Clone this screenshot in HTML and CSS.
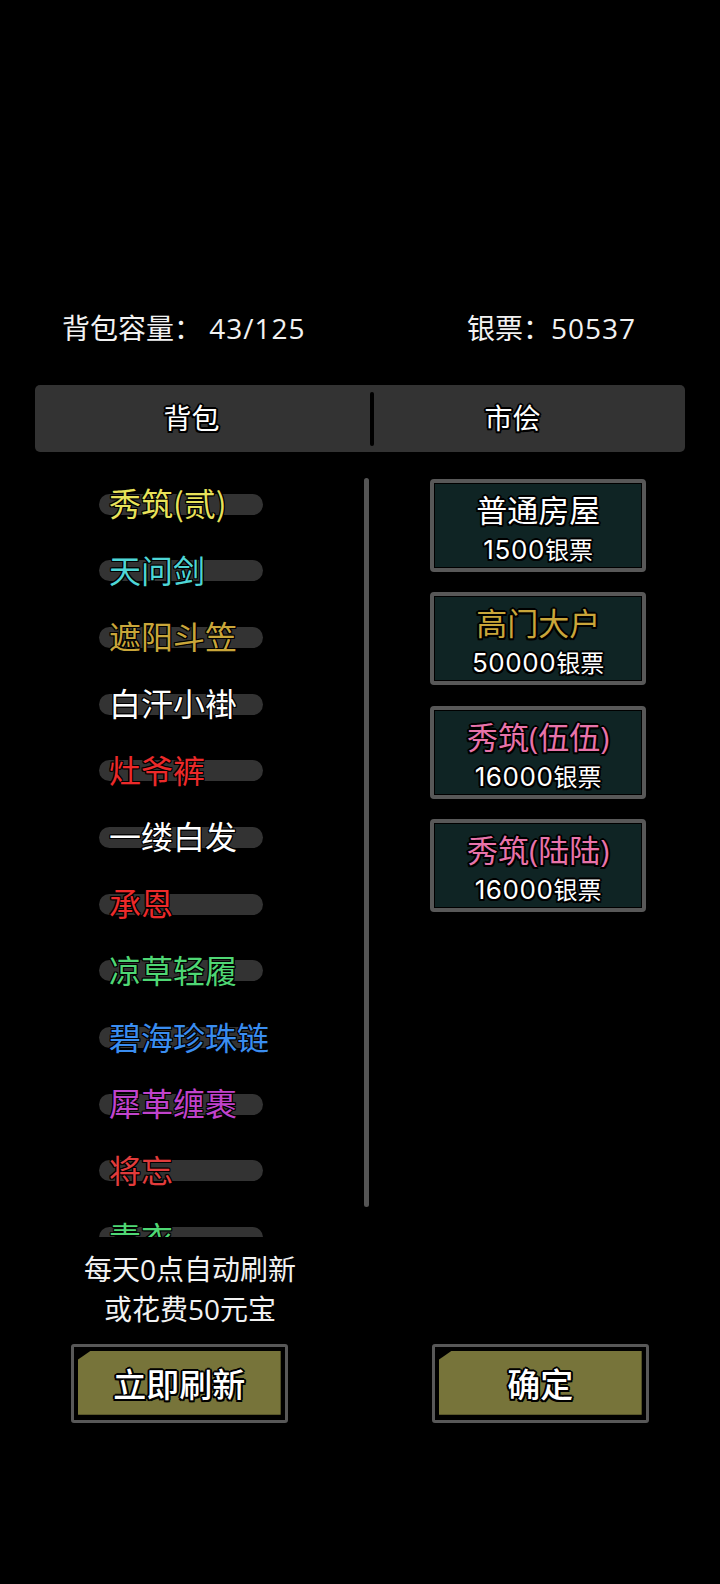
FILE: index.html
```html
<!DOCTYPE html>
<html lang="zh">
<head>
<meta charset="utf-8">
<title>市侩</title>
<link rel="stylesheet" href="styles.css">
</head>
<body>
<div class="page">
  <div class="stats">
    <div class="stat stat-bag">背包容量： <span class="num">43/125</span></div>
    <div class="stat stat-money">银票：<span class="num">50537</span></div>
  </div>

  <div class="tabs">
    <div class="tab tab-bag">背包</div>
    <div class="tab-divider"></div>
    <div class="tab tab-shop">市侩</div>
  </div>

  <div class="main">
    <div class="list">
      <div class="item"><span class="pill"></span><span class="name c-yellow">秀筑(贰)</span></div>
      <div class="item"><span class="pill"></span><span class="name c-cyan">天问剑</span></div>
      <div class="item"><span class="pill"></span><span class="name c-gold">遮阳斗笠</span></div>
      <div class="item"><span class="pill"></span><span class="name c-white">白汗小褂</span></div>
      <div class="item"><span class="pill"></span><span class="name c-red">灶爷裤</span></div>
      <div class="item"><span class="pill"></span><span class="name c-white">一缕白发</span></div>
      <div class="item"><span class="pill"></span><span class="name c-red">承恩</span></div>
      <div class="item"><span class="pill"></span><span class="name c-green">凉草轻履</span></div>
      <div class="item"><span class="pill"></span><span class="name c-blue">碧海珍珠链</span></div>
      <div class="item"><span class="pill"></span><span class="name c-purple">犀革缠裹</span></div>
      <div class="item"><span class="pill"></span><span class="name c-red2">将忘</span></div>
      <div class="item"><span class="pill"></span><span class="name c-green">青衣</span></div>
    </div>
    <div class="scrollbar"></div>
    <div class="shop">
      <div class="card">
        <div class="card-title c-white">普通房屋</div>
        <div class="card-price"><span class="price-num">1500</span>银票</div>
      </div>
      <div class="card">
        <div class="card-title c-gold">高门大户</div>
        <div class="card-price"><span class="price-num">50000</span>银票</div>
      </div>
      <div class="card">
        <div class="card-title c-pink">秀筑(伍伍)</div>
        <div class="card-price"><span class="price-num">16000</span>银票</div>
      </div>
      <div class="card">
        <div class="card-title c-pink">秀筑(陆陆)</div>
        <div class="card-price"><span class="price-num">16000</span>银票</div>
      </div>
    </div>
  </div>

  <div class="notice">
    <div>每天0点自动刷新</div>
    <div>或花费50元宝</div>
  </div>

  <div class="actions">
    <div class="btn"><div class="btn-fill">立即刷新</div></div>
    <div class="btn"><div class="btn-fill">确定</div></div>
  </div>
</div>
</body>
</html>
```

FILE: styles.css
```css
* { box-sizing: border-box; }

html, body {
  margin: 0;
  padding: 0;
  background: #000;
}

body {
  width: 720px;
  height: 1584px;
  overflow: hidden;
  font-family: "Open Sans", "Noto Sans CJK SC", sans-serif;
  color: #fff;
}

.page {
  padding-top: 308px;
}

/* top stats */
.stats {
  display: flex;
  height: 40px;
  align-items: center;
  font-size: 28px;
  line-height: 40px;
  color: #f2f2f2;
  white-space: pre;
}
.stats .num {
  letter-spacing: 1px;
}
.stat-bag {
  width: 467px;
  padding-left: 62px;
}
.stat-money {
  flex: 1;
}

/* tabs */
.tabs {
  margin: 37px 35px 0 35px;
  height: 67px;
  background: #333333;
  border-radius: 5px;
  display: flex;
  align-items: center;
}
.tab {
  text-align: center;
  font-size: 28px;
  line-height: 67px;
  color: #fff;
  text-shadow:
    -2px 0 0 #000, 2px 0 0 #000, 0 -2px 0 #000, 0 2px 0 #000,
    -1.5px -1.5px 0 #000, 1.5px 1.5px 0 #000, -1.5px 1.5px 0 #000, 1.5px -1.5px 0 #000;
}
.tab-bag {
  width: 335px;
  padding-right: 22px;
}
.tab-shop {
  flex: 1;
  padding-right: 34px;
}
.tab-divider {
  width: 4px;
  height: 54px;
  background: #000;
  border-radius: 2px;
}

/* main area */
.main {
  display: flex;
  margin-top: 16.7px;
  height: 768px;
}

.list {
  width: 363.6px;
  height: 768px;
  overflow: hidden;
}

.item {
  display: grid;
  height: 66.7px;
  align-items: center;
}
.item > * {
  grid-area: 1 / 1;
}
.pill {
  width: 164px;
  height: 21px;
  margin-left: 99px;
  margin-top: 4px;
  background: #333333;
  border-radius: 11px;
}
.name {
  margin-left: 109px;
  font-family: "Noto Sans CJK SC", sans-serif;
  font-size: 32px;
  line-height: 40px;
  text-shadow:
    -1px 0 0 #000, 1px 0 0 #000, 0 -1px 0 #000, 0 1px 0 #000,
    -1px -1px 0 #000, 1px 1px 0 #000, -1px 1px 0 #000, 1px -1px 0 #000;
}

.c-yellow { color: #e8e25a; }
.c-cyan { color: #4ed6d6; }
.c-gold { color: #c9a63a; }
.c-white { color: #ffffff; }
.c-red { color: #ec2a2a; }
.c-red2 { color: #e23c3c; }
.c-green { color: #4fd774; }
.c-blue { color: #3a8df0; }
.c-purple { color: #c043cc; }
.c-pink { color: #e873aa; }

.scrollbar {
  width: 5px;
  height: 729px;
  margin-top: 9.3px;
  background: #555555;
  border-radius: 3px;
}

.shop {
  margin-left: 61.3px;
  padding-top: 10.3px;
  display: flex;
  flex-direction: column;
  gap: 20.3px;
}

.card {
  width: 216.5px;
  height: 93px;
  border: 4px solid #585858;
  border-radius: 4px;
  background: #0f2424;
  box-shadow: inset 0 0 0 1px #000;
  padding-top: 7px;
  text-align: center;
  text-shadow:
    -2px 0 0 #000, 2px 0 0 #000, 0 -2px 0 #000, 0 2px 0 #000,
    -1.5px -1.5px 0 #000, 1.5px 1.5px 0 #000, -1.5px 1.5px 0 #000, 1.5px -1.5px 0 #000;
}
.card-title {
  font-size: 31px;
  line-height: 40px;
}
.card-price {
  font-size: 24px;
  line-height: 39px;
  color: #fff;
}
.price-num {
  font-family: Inter, "Open Sans", sans-serif;
  font-size: 26px;
  letter-spacing: 0.6px;
}

/* notice */
.notice {
  width: 380px;
  margin-top: 12px;
  text-align: center;
  font-size: 28px;
  line-height: 40px;
  color: #f2f2f2;
}

/* buttons */
.actions {
  display: flex;
  margin-top: 15px;
  padding-left: 70.7px;
  gap: 144px;
}
.btn {
  width: 217px;
  height: 79px;
  border: 3px solid #585858;
  border-radius: 3px;
  padding: 4px 4px 5px 4px;
  background: #000;
}
.btn-fill {
  height: 100%;
  background: #77743a;
  clip-path: polygon(0 9px, 13px 0, 100% 0, 100% 100%, 0 100%);
  display: flex;
  align-items: center;
  justify-content: center;
  font-family: "Noto Sans CJK SC", sans-serif;
  font-size: 33px;
  font-weight: 500;
  color: #fff;
  text-shadow:
    -2px 0 0 #000, 2px 0 0 #000, 0 -2px 0 #000, 0 2px 0 #000,
    -1.5px -1.5px 0 #000, 1.5px 1.5px 0 #000, -1.5px 1.5px 0 #000, 1.5px -1.5px 0 #000;
}
```
